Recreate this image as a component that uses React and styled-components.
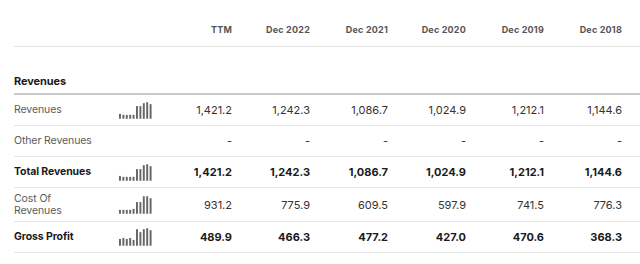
import React from "react";
import styled, { createGlobalStyle } from "styled-components";

const GlobalStyle = createGlobalStyle`
  body {
    margin: 0;
    background: #ffffff;
    font-family: Inter, "Noto Sans", "Liberation Sans", sans-serif;
  }
`;

const columns = ["TTM", "Dec 2022", "Dec 2021", "Dec 2020", "Dec 2019", "Dec 2018"];

const rows = [
  {
    label: "Revenues",
    spark: [5, 4, 4, 4, 4, 13, 13, 16, 17, 15],
    values: ["1,421.2", "1,242.3", "1,086.7", "1,024.9", "1,212.1", "1,144.6"],
  },
  {
    label: "Other Revenues",
    values: ["-", "-", "-", "-", "-", "-"],
  },
  {
    label: "Total Revenues",
    bold: true,
    spark: [5, 4, 4, 4, 4, 12, 12, 16, 17, 15],
    values: ["1,421.2", "1,242.3", "1,086.7", "1,024.9", "1,212.1", "1,144.6"],
  },
  {
    label: "Cost Of Revenues",
    tall: true,
    spark: [4, 4, 4, 4, 5, 12, 12, 18, 18, 16],
    values: ["931.2", "775.9", "609.5", "597.9", "741.5", "776.3"],
  },
  {
    label: "Gross Profit",
    bold: true,
    spark: [7, 8, 7, 8, 6, 17, 14, 17, 18, 16],
    values: ["489.9", "466.3", "477.2", "427.0", "470.6", "368.3"],
  },
];

const Sparkline = ({ data }) => (
  <svg width="36" height="18" viewBox="0 0 36 18">
    {data.map((h, i) => (
      <rect key={i} x={i * 3.5} y={18 - h} width="2" height={h} fill="#666666" />
    ))}
  </svg>
);

const App = () => {
  return (
    <Page>
      <GlobalStyle />
      <Table>
        <HeaderRow>
          <span />
          <span />
          {columns.map((c) => (
            <HeadCell key={c}>{c}</HeadCell>
          ))}
        </HeaderRow>
        <SectionRow>Revenues</SectionRow>
        {rows.map((r) => (
          <Row key={r.label} tall={r.tall}>
            <Label bold={r.bold} tall={r.tall}>
              {r.label}
            </Label>
            <SparkCell>{r.spark && <Sparkline data={r.spark} />}</SparkCell>
            {r.values.map((v, i) => (
              <Value key={i} bold={r.bold}>
                {v}
              </Value>
            ))}
          </Row>
        ))}
      </Table>
    </Page>
  );
};

export default App;

const Page = styled.div`
  width: 640px;
  height: 264px;
  overflow: hidden;
  padding-left: 14px;
  box-sizing: border-box;
`;

const Table = styled.div`
  display: flex;
  flex-direction: column;
`;

const Grid = styled.div`
  display: grid;
  grid-template-columns: 92px 48px repeat(6, 78px);
  padding-right: 18px;
`;

const HeaderRow = styled(Grid)`
  height: 47px;
  align-items: end;
  padding-bottom: 11px;
  box-sizing: border-box;
  border-bottom: 1px solid #e4e4e4;
`;

const HeadCell = styled.div`
  text-align: right;
  font-size: 9px;
  line-height: 11px;
  font-weight: 700;
  letter-spacing: 0.2px;
  color: #555555;
`;

const SectionRow = styled.div`
  height: 48px;
  display: flex;
  align-items: flex-end;
  padding-bottom: 5px;
  box-sizing: border-box;
  border-bottom: 2px solid #c9c9c9;
  font-size: 11px;
  line-height: 14px;
  font-weight: 700;
  letter-spacing: -0.1px;
  color: #1a1a1a;
`;

const Row = styled(Grid)`
  height: ${(p) => (p.tall ? "34px" : "31px")};
  align-items: center;
  box-sizing: border-box;
  border-bottom: 1px solid #e6e6e6;
`;

const Label = styled.div`
  font-size: 10.5px;
  line-height: 12px;
  letter-spacing: -0.1px;
  font-weight: ${(p) => (p.bold ? 700 : 400)};
  color: ${(p) => (p.bold ? "#1a1a1a" : "#5c5c5c")};
  width: ${(p) => (p.tall ? "70px" : "auto")};
  white-space: ${(p) => (p.tall ? "normal" : "nowrap")};
`;

const SparkCell = styled.div`
  display: flex;
  align-items: center;
  padding-left: 13px;
  height: 18px;
`;

const Value = styled.div`
  text-align: right;
  font-size: 11px;
  line-height: 14px;
  font-weight: ${(p) => (p.bold ? 700 : 400)};
  color: ${(p) => (p.bold ? "#1a1a1a" : "#333333")};
`;
